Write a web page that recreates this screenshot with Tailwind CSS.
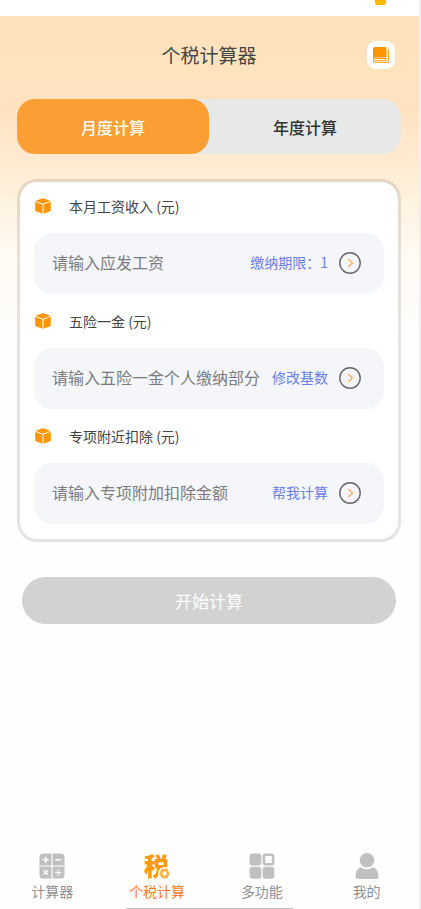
<!DOCTYPE html>
<html lang="zh-CN">
<head>
<meta charset="utf-8">
<meta name="viewport" content="width=device-width, initial-scale=1">
<title>个税计算器</title>
<script src="https://cdn.jsdelivr.net/npm/@tailwindcss/browser@4"></script>
</head>
<body class="flex min-h-screen flex-col border-r-2 border-[#efefef] bg-[#fefefe] font-['Noto_Sans_CJK_SC',sans-serif] text-[#444444]">
<svg class="hidden" aria-hidden="true">
  <symbol id="cube" viewBox="0 0 16 16">
    <path fill="#ff9500" d="M7 .5Q8 .1 9 .5L14.700 2.600Q15.800 3.100 15.800 4.200V12Q15.800 13.200 14.700 13.600L9 15.600Q8 16 7 15.600L1.300 13.600Q.2 13.200.2 12V4.200Q.2 3.100 1.300 2.600z"/>
    <path d="M.2 3.300 8 6.300 15.800 3.300M8 6.300V16" fill="none" stroke="#fff" stroke-width="1"/>
  </symbol>
  <symbol id="arrow" viewBox="0 0 22 22">
    <circle cx="11" cy="11" r="10.200" fill="none" stroke="#666" stroke-width="1.400"/>
    <path d="m9.200 7 4.200 4-4.200 4" fill="none" stroke="#ffb05c" stroke-width="1.500"/>
  </symbol>
</svg>

<div class="flex h-4 justify-end bg-white pr-[33px]">
  <span class="h-[5px] w-[11px] rounded-b-xs bg-[#ffb900]"></span>
</div>

<main class="flex grow flex-col bg-[linear-gradient(to_bottom,#ffe2bb_0px,#ffe3c1_90px,#ffebd2_150px,#fff3e2_190px,#fffaf2_240px,#fefefe_330px)] pr-[18px] pl-[17px]">
  <header class="grid h-[83px] grid-cols-[28px_1fr_28px] items-center px-1.5 pb-[5px]">
    <h1 class="col-start-2 text-center text-[19px] leading-7">个税计算器</h1>
    <button type="button" aria-label="说明" class="flex size-7 items-center justify-center rounded-[9px] bg-white">
      <svg class="size-4" viewBox="0 0 16 16">
        <path fill="#ff9500" d="M2 0H12.500Q13.500 0 13.500 1V10.600H2.500Q1.200 10.600 0 11.600V2Q0 0 2 0z"/>
        <path d="M15.300 2.400V15.300H2.300Q.6 15.300.6 13.400T2.300 11.500H13" fill="none" stroke="#ff9500" stroke-width="1.100"/>
        <path d="M2.400 13.400H13V11" fill="none" stroke="#ff9500" stroke-width=".9"/>
      </svg>
    </button>
  </header>

  <div role="tablist" class="grid h-[55px] shrink-0 grid-cols-2 rounded-[18px] bg-[#e8e8e8] text-base font-medium">
    <button type="button" role="tab" aria-selected="true" class="rounded-[18px] bg-[#fb9e33] text-white">月度计算</button>
    <button type="button" role="tab" aria-selected="false" class="text-[#333333]">年度计算</button>
  </div>

  <form class="flex flex-col">
    <div class="mt-[25px] flex flex-col gap-[3px] rounded-[20px] border-3 border-black/10 bg-white bg-clip-padding px-[14px] pb-[15px]">
      <label for="salary" class="flex h-12 items-center gap-[18px] text-sm"><svg class="ml-px size-4"><use href="#cube"/></svg>本月工资收入 (元)</label>
      <div class="flex h-[61px] items-center rounded-[18px] bg-[#f4f6fa] pr-[23px] pb-1 pl-[18px]">
        <input id="salary" type="text" placeholder="请输入应发工资" class="min-w-0 flex-1 text-base outline-none placeholder:text-[#7c7c7c]">
        <button type="button" class="flex items-center gap-[11px] text-sm text-[#6a80e4]">缴纳期限：1<svg class="mt-0.5 size-[22px]"><use href="#arrow"/></svg></button>
      </div>
      <label for="insurance" class="flex h-12 items-center gap-[18px] text-sm"><svg class="ml-px size-4"><use href="#cube"/></svg>五险一金 (元)</label>
      <div class="flex h-[61px] items-center rounded-[18px] bg-[#f4f6fa] pr-[23px] pb-1 pl-[18px]">
        <input id="insurance" type="text" placeholder="请输入五险一金个人缴纳部分" class="min-w-0 flex-1 text-base outline-none placeholder:text-[#7c7c7c]">
        <button type="button" class="flex items-center gap-[11px] text-sm text-[#6a80e4]">修改基数<svg class="mt-0.5 size-[22px]"><use href="#arrow"/></svg></button>
      </div>
      <label for="deduction" class="flex h-12 items-center gap-[18px] text-sm"><svg class="ml-px size-4"><use href="#cube"/></svg>专项附近扣除 (元)</label>
      <div class="flex h-[61px] items-center rounded-[18px] bg-[#f4f6fa] pr-[23px] pb-1 pl-[18px]">
        <input id="deduction" type="text" placeholder="请输入专项附加扣除金额" class="min-w-0 flex-1 text-base outline-none placeholder:text-[#7c7c7c]">
        <button type="button" class="flex items-center gap-[11px] text-sm text-[#6a80e4]">帮我计算<svg class="mt-0.5 size-[22px]"><use href="#arrow"/></svg></button>
      </div>
    </div>
    <button type="submit" class="mx-[5px] mt-[35px] h-[47px] rounded-full bg-[#d2d2d2] text-[17px] text-white">开始计算</button>
  </form>
</main>

<nav class="flex flex-col items-center">
  <div class="grid w-full grid-cols-4 pb-[7px] text-sm leading-5 text-[#909090]">
    <a href="#calc" class="flex flex-col items-center gap-0.5">
      <svg class="size-[26px]" viewBox="0 0 26 26"><path fill="#c0c0c0" d="M4 .5H12.400V12.400H.5V4Q.5.5 4 .5zM13.600.5H22Q25.500.5 25.500 4V12.400H13.600zM.5 13.600H12.400V25.500H4Q.5 25.500.5 22zM13.600 13.600H25.500V22Q25.500 25.500 22 25.500H13.600z"/><path d="M3.700 6.800H9.700M6.700 3.800V9.800M16.300 6.800H22.300M4.700 17.300 8.900 21.500M8.900 17.300 4.700 21.500M16.300 19.400H22.300M19.300 16.300V17.700M19.300 21.100V22.500" fill="none" stroke="#fff" stroke-width="1.500"/></svg>
      计算器
    </a>
    <a href="#tax" aria-current="page" class="flex flex-col items-center gap-0.5 text-[#ff7d20]">
      <svg class="size-[26px] overflow-visible" viewBox="0 0 26 26"><text x="0" y="23" font-size="25" font-weight="900" fill="#ff9a0a">税</text><circle cx="20.500" cy="20.500" r="6.500" fill="#fefefe"/><path d="M18.200 16.400h4.600l2.300 4.100-2.300 4.100h-4.600l-2.300-4.100z" fill="#ffb648" stroke="#ffb648" stroke-width="1.400" stroke-linejoin="round"/><circle cx="20.500" cy="20.500" r="2" fill="#fefefe"/></svg>
      个税计算
    </a>
    <a href="#more" class="flex flex-col items-center gap-0.5">
      <svg class="size-[26px]" viewBox="0 0 26 26" fill="#c0c0c0"><rect x=".5" y=".5" width="11.800" height="12" rx="3"/><rect x=".5" y="13.700" width="11.800" height="12" rx="3"/><rect x="13.600" y="13.700" width="11.800" height="12" rx="3"/><rect x="14.900" y="1.800" width="9.200" height="9.400" rx="1.500" fill="#fff" stroke="#c0c0c0" stroke-width="2.600"/></svg>
      多功能
    </a>
    <a href="#mine" class="flex flex-col items-center gap-0.5">
      <svg class="size-[26px]" viewBox="0 0 26 26" fill="#c0c0c0"><circle cx="13" cy="7.300" r="7.300"/><path d="M6.500 14.300Q13 18.500 19.500 14.300Q24.500 17 24.500 23.500Q24.500 26 22 26H4Q1.500 26 1.500 23.500Q1.500 17 6.500 14.300z"/></svg>
      我的
    </a>
  </div>
  <span class="h-px w-2/5 bg-[#bdbdbd]"></span>
</nav>
</body>
</html>
